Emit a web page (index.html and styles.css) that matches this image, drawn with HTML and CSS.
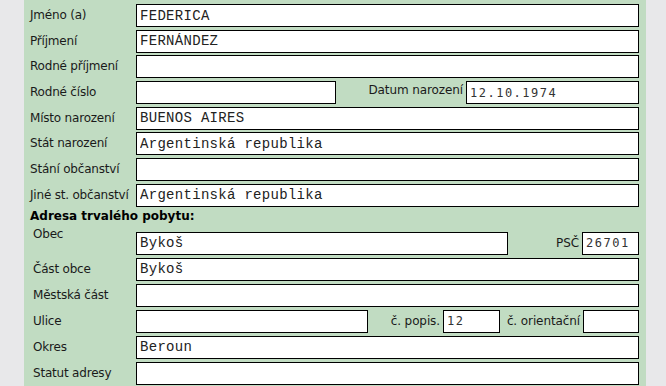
FILE: index.html
```html
<!DOCTYPE html>
<html lang="cs">
  <head>
    <meta charset="UTF-8" />
    <meta name="viewport" content="width=device-width, initial-scale=1.0" />
    <title>Osobní údaje</title>
    <link rel="stylesheet" href="styles.css">
  </head>
  <body>
    <div class="panel">
      <div class="rows">
        <div class="row">
          <label class="label">Jméno (a)</label>
          <input class="field mono" type="text" value="FEDERICA" />
        </div>
        <div class="row">
          <label class="label">Příjmení</label>
          <input class="field mono" type="text" value="FERNÁNDEZ" />
        </div>
        <div class="row">
          <label class="label">Rodné příjmení</label>
          <input class="field mono" type="text" value="" />
        </div>
        <div class="row">
          <label class="label">Rodné číslo</label>
          <input class="field mono w-rc" type="text" value="" />
          <label class="label-inline label-up">Datum narození</label>
          <input class="field num w-date" type="text" value="12.10.1974" />
        </div>
        <div class="row">
          <label class="label">Místo narození</label>
          <input class="field mono" type="text" value="BUENOS AIRES" />
        </div>
        <div class="row">
          <label class="label">Stát narození</label>
          <input class="field mono" type="text" value="Argentinská republika" />
        </div>
        <div class="row">
          <label class="label">Stání občanství</label>
          <input class="field mono" type="text" value="" />
        </div>
        <div class="row">
          <label class="label">Jiné st. občanství</label>
          <input class="field mono" type="text" value="Argentinská republika" />
        </div>
      </div>

      <h2 class="section">Adresa trvalého pobytu:</h2>

      <div class="rows address">
        <div class="row">
          <label class="label label-high">Obec</label>
          <input class="field mono w-obec" type="text" value="Bykoš" />
          <label class="label-inline">PSČ</label>
          <input class="field num w-small" type="text" value="26701" />
        </div>
        <div class="row">
          <label class="label">Část obce</label>
          <input class="field mono" type="text" value="Bykoš" />
        </div>
        <div class="row">
          <label class="label">Městská část</label>
          <input class="field mono" type="text" value="" />
        </div>
        <div class="row">
          <label class="label">Ulice</label>
          <input class="field mono w-ulice" type="text" value="" />
          <label class="label-inline w-popis">č. popis.</label>
          <input class="field num w-small" type="text" value="12" />
          <label class="label-inline w-orient">č. orientační</label>
          <input class="field num w-orient-in" type="text" value="" />
        </div>
        <div class="row">
          <label class="label">Okres</label>
          <input class="field mono" type="text" value="Beroun" />
        </div>
        <div class="row">
          <label class="label">Statut adresy</label>
          <input class="field mono" type="text" value="" />
        </div>
      </div>
    </div>
  </body>
</html>
```

FILE: styles.css
```css
body {
  margin: 0;
  background: #e8e8ea;
  font-family: "DejaVu Sans", Verdana, sans-serif;
  font-size: 12px;
  color: #1a1a1a;
}
.panel {
  width: 609px;
  margin-left: 24px;
  padding: 4px 7px 1px 6px;
  background: #c1dcc2;
}
.rows {
  display: flex;
  flex-direction: column;
  gap: 2.7px;
}
.rows.address {
  gap: 3px;
}
.row {
  display: flex;
  align-items: center;
  height: 23px;
}
.label {
  width: 106px;
  flex: none;
  padding-bottom: 1px;
  white-space: nowrap;
  letter-spacing: -0.2px;
}
.address .label {
  width: 103px;
  padding-left: 3px;
}
.address .label-high {
  align-self: flex-start;
  margin-top: -5px;
}
.label-inline {
  flex: 1;
  text-align: right;
  padding: 0 3px 1px 0;
  white-space: nowrap;
  letter-spacing: -0.1px;
}
.label-up {
  padding-bottom: 5px;
}
.w-popis {
  flex: none;
  box-sizing: border-box;
  width: 75px;
}
.w-orient {
  flex: none;
  box-sizing: border-box;
  width: 83px;
}
.field {
  box-sizing: border-box;
  height: 23px;
  margin: 0;
  padding: 0 3px;
  border: 1px solid #000;
  background: #fff;
  outline: none;
  flex: 1;
  min-width: 0;
}
.mono {
  font-family: "Liberation Mono", "Courier New", monospace;
  font-size: 14px;
  letter-spacing: 0.3px;
  color: #222;
}
.num {
  font-family: "DejaVu Sans Mono", monospace;
  font-size: 12px;
  letter-spacing: 1.5px;
  color: #333;
}
.w-rc {
  flex: none;
  width: 200px;
}
.w-date {
  flex: none;
  width: 173px;
}
.w-obec {
  flex: none;
  width: 372px;
}
.w-ulice {
  flex: none;
  width: 232px;
}
.w-small {
  flex: none;
  width: 57px;
}
.w-orient-in {
  flex: none;
  width: 56px;
}
.section {
  margin: 0;
  height: 25px;
  line-height: 19px;
  font-size: 12px;
  font-weight: bold;
  color: #000;
}
```
